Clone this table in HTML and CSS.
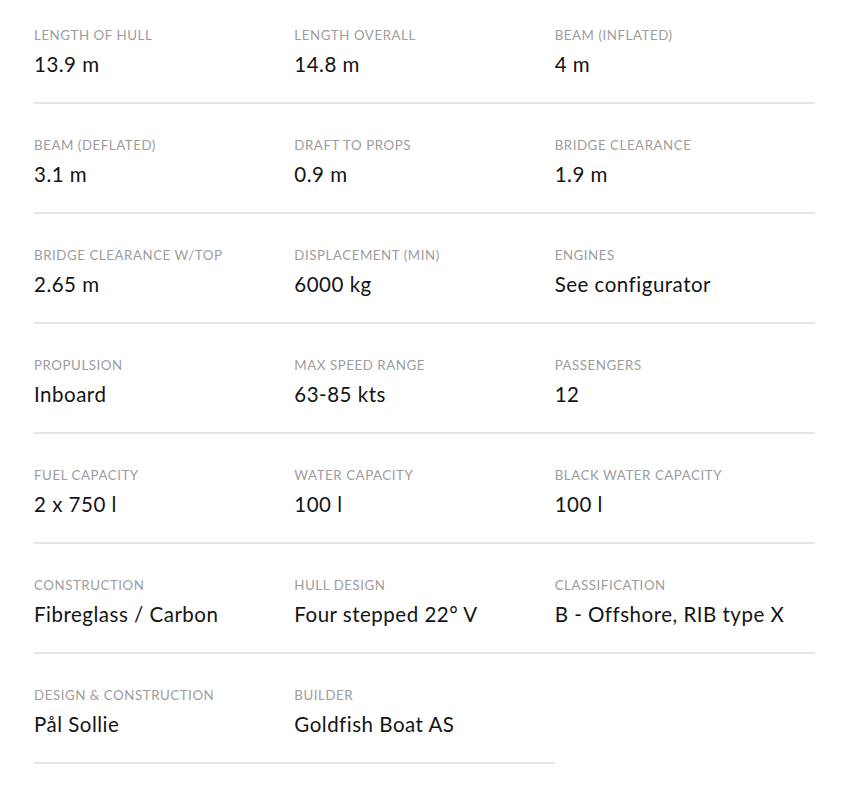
FILE: index.html
```html
<!DOCTYPE html>
<html lang="en">
<head>
<meta charset="utf-8">
<title>Specifications</title>
<link rel="stylesheet" href="styles.css">
</head>
<body>
<div class="specs">
  <div class="spec"><div class="label">Length of hull</div><div class="value">13.9 m</div></div>
  <div class="spec"><div class="label">Length overall</div><div class="value">14.8 m</div></div>
  <div class="spec"><div class="label">Beam (inflated)</div><div class="value">4 m</div></div>
  <div class="spec"><div class="label">Beam (deflated)</div><div class="value">3.1 m</div></div>
  <div class="spec"><div class="label">Draft to props</div><div class="value">0.9 m</div></div>
  <div class="spec"><div class="label">Bridge clearance</div><div class="value">1.9 m</div></div>
  <div class="spec"><div class="label">Bridge clearance w/top</div><div class="value">2.65 m</div></div>
  <div class="spec"><div class="label">Displacement (min)</div><div class="value">6000 kg</div></div>
  <div class="spec"><div class="label">Engines</div><div class="value">See configurator</div></div>
  <div class="spec"><div class="label">Propulsion</div><div class="value">Inboard</div></div>
  <div class="spec"><div class="label">Max speed range</div><div class="value">63-85 kts</div></div>
  <div class="spec"><div class="label">Passengers</div><div class="value">12</div></div>
  <div class="spec"><div class="label">Fuel capacity</div><div class="value">2 x 750 l</div></div>
  <div class="spec"><div class="label">Water capacity</div><div class="value">100 l</div></div>
  <div class="spec"><div class="label">Black water capacity</div><div class="value">100 l</div></div>
  <div class="spec"><div class="label">Construction</div><div class="value">Fibreglass / Carbon</div></div>
  <div class="spec"><div class="label">Hull design</div><div class="value">Four stepped 22° V</div></div>
  <div class="spec"><div class="label">Classification</div><div class="value">B - Offshore, RIB type X</div></div>
  <div class="spec"><div class="label">Design &amp; construction</div><div class="value">Pål Sollie</div></div>
  <div class="spec"><div class="label">Builder</div><div class="value">Goldfish Boat AS</div></div>
</div>
</body>
</html>
```
FILE: styles.css
```css
html, body {
  margin: 0;
  padding: 0;
  background: #ffffff;
}
body {
  font-family: Lato, "Liberation Sans", sans-serif;
  color: #111111;
}
.specs {
  display: grid;
  grid-template-columns: repeat(3, 260.33px);
  row-gap: 6px;
  padding: 0 0 0 34px;
}
.spec {
  padding-top: 27px;
  padding-bottom: 26px;
  border-bottom: 2px solid #e6e6e6;
}
.label {
  font-size: 13.3px;
  line-height: 16px;
  text-transform: uppercase;
  color: #9d9d9d;
  letter-spacing: 0.55px;
}
.value {
  margin-top: 9px;
  font-size: 20.5px;
  line-height: 24px;
  color: #141414;
  letter-spacing: 0.5px;
}
```
